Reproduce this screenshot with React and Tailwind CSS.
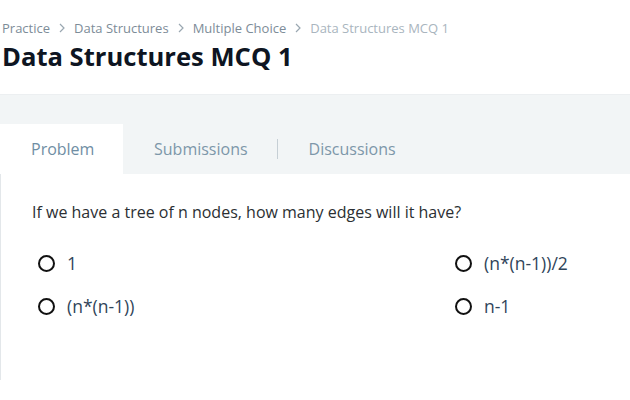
import React from 'react';

const crumbs = ['Practice', 'Data Structures', 'Multiple Choice'];

const options = ['1', '(n*(n-1))/2', '(n*(n-1))', 'n-1'];

const Chevron = () => (
  <svg width="8" height="10" viewBox="0 0 8 10" className="mx-[8px]">
    <path d="M2 1 L6 5 L2 9" fill="none" stroke="#9aa7b1" strokeWidth="1.2" />
  </svg>
);

const App = () => {
  return (
    <div className="w-[630px] h-[400px] bg-white overflow-hidden font-['Open_Sans',sans-serif]">
      {/* Header */}
      <div className="pt-[19px] px-[2px]">
        <div className="flex items-center text-[13px] leading-[18px] text-[#7d8c98]">
          {crumbs.map((c) => (
            <span key={c} className="flex items-center">
              {c}
              <Chevron />
            </span>
          ))}
          <span className="text-[#a9b5be]">Data Structures MCQ 1</span>
        </div>
        <h1 className="mt-[2px] text-[25.6px] leading-[36px] font-bold text-[#0e1522]">
          Data Structures MCQ 1
        </h1>
      </div>

      {/* Tabs band */}
      <div className="mt-[19px] h-[80px] bg-[#f2f5f6] border-t border-[#eceff1] flex items-end">
        <div className="w-[123px] h-[50px] bg-white flex items-center pl-[31px] text-[16px] text-[#6f8ea4]">
          Problem
        </div>
        <div className="h-[50px] flex items-center text-[16px] text-[#7d97a9]">
          <span className="ml-[31px]">Submissions</span>
          <span className="ml-[29px] w-px h-[20px] bg-[#c6cfd5]" />
          <span className="ml-[31px]">Discussions</span>
        </div>
      </div>

      {/* Problem body */}
      <div className="h-[206px] border-l border-[#e3e7ea] pl-[31px] pt-[26px]">
        <p className="text-[16px] leading-[24px] text-[#2b2f33]">
          If we have a tree of n nodes, how many edges will it have?
        </p>
        <div className="mt-[29px] grid grid-cols-[417px_1fr] gap-y-[23px] pl-[6px]">
          {options.map((o) => (
            <label key={o} className="flex items-center h-[20px]">
              <span className="w-[17px] h-[17px] rounded-full border-2 border-[#111] bg-white" />
              <span className="ml-[12px] text-[17.5px] text-[#2f4459]">{o}</span>
            </label>
          ))}
        </div>
      </div>
    </div>
  );
};

export default App;
